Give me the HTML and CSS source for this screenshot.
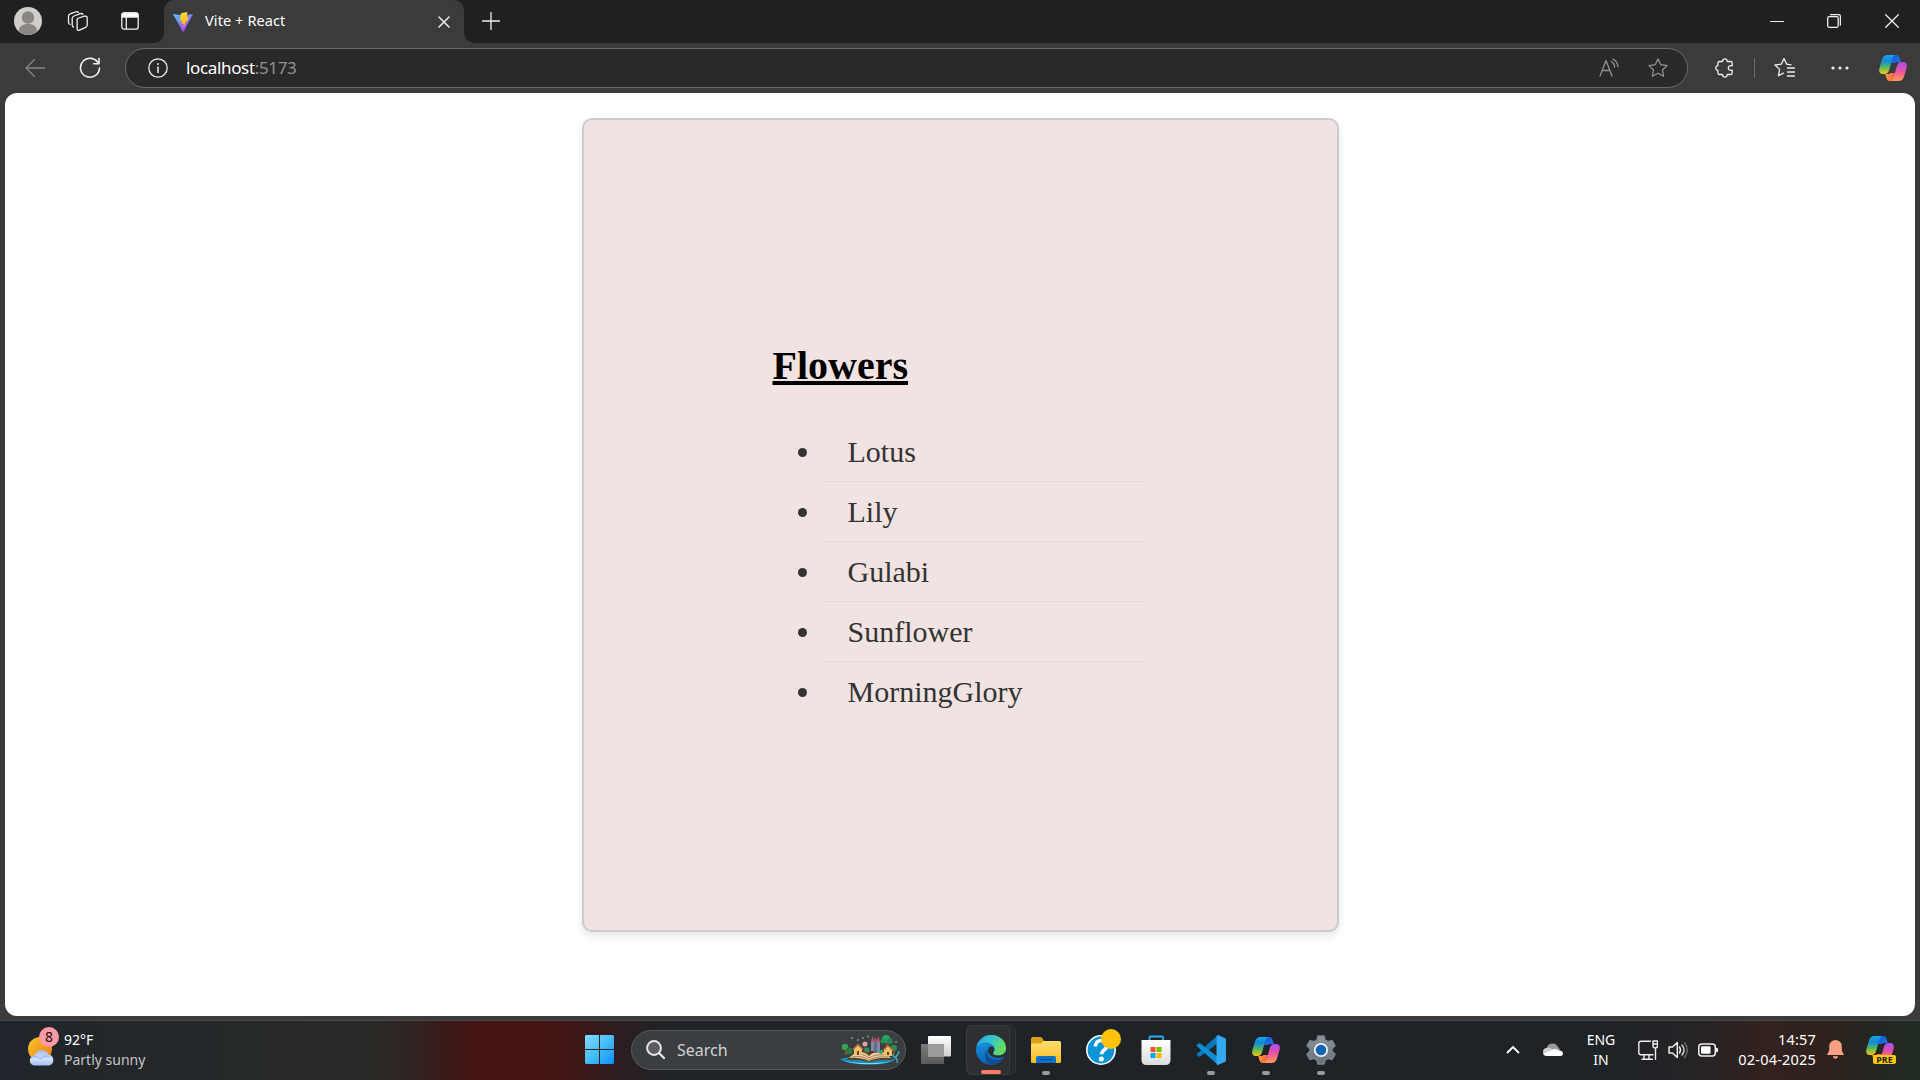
FILE: index.html
```html
<!DOCTYPE html>
<html lang="en">
<head>
<meta charset="utf-8">
<title>Vite + React</title>
<link rel="stylesheet" href="styles.css">
</head>
<body>
<svg class="defs" aria-hidden="true">
  <defs>
    <linearGradient id="cpBlue" x1="0" y1="0" x2="0" y2="1"><stop offset="0" stop-color="#18a5ee"/><stop offset=".3" stop-color="#1488dc"/><stop offset=".6" stop-color="#45b66c"/><stop offset="1" stop-color="#f5c90c"/></linearGradient>
    <linearGradient id="cpPink" x1="0" y1="0" x2="0" y2="1"><stop offset="0" stop-color="#a34ff0"/><stop offset=".45" stop-color="#e950a4"/><stop offset="1" stop-color="#ff9a55"/></linearGradient>
    <linearGradient id="cpNavy" x1="0" y1="0" x2="1" y2="1"><stop offset="0" stop-color="#1458d8"/><stop offset="1" stop-color="#2472e8"/></linearGradient>
    <linearGradient id="cpOrange" x1="0" y1="0" x2="1" y2="0"><stop offset="0" stop-color="#ff9b35"/><stop offset="1" stop-color="#f05b50"/></linearGradient>
    <linearGradient id="viteA" x1="0" y1="0" x2=".7" y2="1"><stop offset="0" stop-color="#41d1ff"/><stop offset="1" stop-color="#bd34fe"/></linearGradient>
    <linearGradient id="viteB" x1="0" y1="0" x2="0" y2="1"><stop offset="0" stop-color="#ffdd35"/><stop offset="1" stop-color="#ffa800"/></linearGradient>
    <linearGradient id="win" gradientUnits="userSpaceOnUse" x1="0" y1="0" x2="29" y2="29"><stop offset="0" stop-color="#84dcff"/><stop offset=".5" stop-color="#45bdf8"/><stop offset="1" stop-color="#0a92fa"/></linearGradient>
    <linearGradient id="sun" x1="0" y1="0" x2="1" y2="1"><stop offset="0" stop-color="#f8c62b"/><stop offset="1" stop-color="#f07a16"/></linearGradient>
    <linearGradient id="cloud" x1="0" y1="0" x2="0" y2="1"><stop offset="0" stop-color="#9dbdf3"/><stop offset=".6" stop-color="#d0e0fb"/><stop offset="1" stop-color="#9fbcf3"/></linearGradient>
    <linearGradient id="edgeTop" x1="0" y1="0" x2="1" y2=".4"><stop offset="0" stop-color="#2aa4dc"/><stop offset=".5" stop-color="#32c3d4"/><stop offset="1" stop-color="#68dc5a"/></linearGradient>
    <linearGradient id="edgeMid" x1="0" y1="0" x2="0" y2="1"><stop offset="0" stop-color="#1b9de2"/><stop offset="1" stop-color="#0c62b8"/></linearGradient>
    <linearGradient id="folder" x1="0" y1="0" x2="0" y2="1"><stop offset="0" stop-color="#ffdf70"/><stop offset="1" stop-color="#f8bd22"/></linearGradient>
    <linearGradient id="bag" x1="0" y1="0" x2="0" y2="1"><stop offset="0" stop-color="#fff"/><stop offset="1" stop-color="#dcdcdc"/></linearGradient>
    <linearGradient id="tvBack" x1="0" y1="0" x2="0" y2="1"><stop offset="0" stop-color="#7c7c7c"/><stop offset="1" stop-color="#5a5a5a"/></linearGradient>
    <linearGradient id="tvFront" x1="0" y1="0" x2="0" y2="1"><stop offset="0" stop-color="#fff"/><stop offset="1" stop-color="#cfcfcf"/></linearGradient>
    <linearGradient id="gear" x1="0" y1="0" x2="0" y2="1"><stop offset="0" stop-color="#8d959c"/><stop offset="1" stop-color="#68717a"/></linearGradient>
    <symbol id="copilot" viewBox="0 0 28 26">
      <path d="M13 0h4.500c1.800 0 2.600 1.200 3.100 2.900L21.800 7H19c-1.500 0-2.300.5-3 1H12z" fill="url(#cpNavy)"/>
      <path d="M15 26h-4.500c-1.800 0-2.600-1.200-3.100-2.900L6.200 19H9c1.200 0 2-.5 2.600-1H16z" fill="url(#cpOrange)"/>
      <path d="M8.500 0h8c-1.800.4-2.400 1.700-3 3.600L10 15.300C9.100 18 8.100 19 5.600 19H3.800C.6 19-.4 16.500.4 13.300L3 4.600C4 1.500 5.600 0 8.500 0z" fill="url(#cpBlue)"/>
      <path d="M19.500 26h-8c1.800-.4 2.400-1.700 3-3.600L18 10.700C18.900 8 19.900 7 22.400 7h1.800c3.200 0 4.200 2.500 3.400 5.700L25 21.400c-1 3.100-2.600 4.600-5.500 4.600z" fill="url(#cpPink)"/>
    </symbol>
  </defs>
</svg>

<header class="titlebar">
  <svg class="avatar" viewBox="0 0 28 28"><circle cx="14" cy="14" r="14" fill="#d0cecb"/><circle cx="14" cy="10.500" r="6.200" fill="#8b8784"/><path d="M4.800 24.500c0-5 3.500-7.500 9.200-7.500s9.200 2.500 9.200 7.500a14 14 0 0 1-18.400 0z" fill="#8b8784"/></svg>
  <svg class="ico workspaces" viewBox="0 0 22 22"><path d="M10.300 8.500l7.200-2.300c1.500-.4 2.700.3 2.700 1.700v7c0 1.200-.6 2-1.700 2.400l-5.900 2.900c-1.400.6-2.500 0-2.500-1.500v-8.200c0-1 .1-1.600.2-2zM6.500 17c-1-.2-1.300-.9-1.300-2V8.500c0-1.300.6-2 1.800-2.500l6.400-2.300c1.200-.4 2-.1 2.500.8M3 14.300c-1-.2-1.500-.9-1.500-2V6.300C1.500 5 2 4.300 3.200 3.800l5.600-2c1.300-.5 2.100-.2 2.700.7"/></svg>
  <svg class="ico tabactions" viewBox="0 0 18 18"><rect x=".8" y=".8" width="16.400" height="16.400" rx="2.500"/><path d="M1 3.500C1 1.800 2 1 3.500 1h11C16 1 17 1.800 17 3.500V5H1z" fill="#fff"/><path d="M5.300 5v12"/></svg>
  <div class="tab">
    <svg class="vite" viewBox="0 0 20 20"><path d="M0 2l10 1.500L20 2 10.800 19.300c-.3.600-1 .6-1.300 0z" fill="url(#viteA)"/><path d="M8 1.200L14.400 0l-.8 5 2-.3-1.200 4.500-1.600.4-2.400 7.200.4-5.300-2.500.6.600-3.600-2.200.4z" fill="url(#viteB)"/></svg>
    <span class="tab-title">Vite + React</span>
    <svg class="ico tab-close" viewBox="0 0 12 12"><path d="M1 1l10 10M11 1L1 11"/></svg>
  </div>
  <svg class="ico newtab" viewBox="0 0 18 18"><path d="M9 .5v17M.5 9h17"/></svg>
  <div class="window-buttons">
    <svg class="ico" viewBox="0 0 14 14"><path d="M.5 7.500h13" stroke-width="1"/></svg>
    <svg class="ico" viewBox="0 0 14 14"><rect x=".7" y="2.700" width="10.500" height="10.600" rx="1.500"/><path d="M3.500.6h8c1.200 0 1.900.8 1.900 2V11"/></svg>
    <svg class="ico" viewBox="0 0 14 14"><path d="M.7.700l12.600 12.600M13.300.7L.7 13.300"/></svg>
  </div>
</header>

<nav class="toolbar">
  <svg class="ico back" viewBox="0 0 20 18"><path d="M19.800 9H1M9.500.5L1 9l8.500 8.500"/></svg>
  <svg class="ico reload" viewBox="0 0 22 22"><path d="M19.500 6.500A9.500 9.500 0 1 0 20.500 11M20 1.500V6.800h-5.300"/></svg>
  <div class="address">
    <svg class="ico" viewBox="0 0 20 20"><circle cx="10" cy="10" r="9.200"/><path d="M10 9v5.500" stroke-width="1.500"/><circle cx="10" cy="6" r="1" fill="#ddd" stroke="none"/></svg>
    <span class="url">localhost<span class="port">:5173</span></span>
    <svg class="ico dim read" viewBox="0 0 20 20"><path d="M1 18L7 2.500 13 18M3.200 12.500h7.700M12.500 3.500c2 1.300 3 3.300 3.200 5.500M14 1c2.900 1.700 4.700 4.200 5 7.500"/></svg>
    <svg class="ico dim" viewBox="0 0 20 20"><path d="M10 1l2.800 5.700 6.300.9-4.600 4.400 1.100 6.300L10 15.300l-5.600 3 1.100-6.300L.9 7.600l6.300-.9z"/></svg>
  </div>
  <svg class="ico puzzle" viewBox="0 0 20 20"><path d="M4.500 3.500h3c.2-1.800 1-2.700 2.400-2.700s2.200.9 2.400 2.700h3.200c1 0 1.700.6 1.700 1.600v2.700c-2.600-.4-3.900.4-3.900 2.200s1.300 2.600 3.900 2.200v2.700c0 1-.7 1.600-1.700 1.600h-3.200c-.2 1.800-1 2.700-2.400 2.700s-2.200-.9-2.400-2.700h-3c-1 0-1.600-.6-1.600-1.600v-2.500C1.600 12.200.8 11.300.8 10s.8-2.200 2.100-2.400V5.100c0-1 .6-1.600 1.600-1.600z"/></svg>
  <i class="divider"></i>
  <svg class="ico favorites" viewBox="0 0 21 20"><path d="M17 7.300l-4.300-.7L10 1 7.400 6.600 1 7.500l4.600 4.400-1.200 6.400 5-2.700M13.500 10.500h7M13.500 14.500h7M13.500 18.500h7" transform="translate(0 -.5)"/></svg>
  <svg class="more" viewBox="0 0 18 4"><circle cx="2" cy="2" r="1.600"/><circle cx="9" cy="2" r="1.600"/><circle cx="16" cy="2" r="1.600"/></svg>
  <svg class="copilot"><use href="#copilot"/></svg>
</nav>

<main class="page">
  <section class="card">
    <h1>Flowers</h1>
    <ul>
      <li>Lotus</li>
      <li>Lily</li>
      <li>Gulabi</li>
      <li>Sunflower</li>
      <li>MorningGlory</li>
    </ul>
  </section>
</main>

<footer class="taskbar">
  <div class="weather">
    <div class="weather-icon">
      <svg viewBox="0 0 27 29"><circle cx="12" cy="12" r="12" fill="url(#sun)"/><path d="M7 28.500a5 5 0 0 1-.5-10 7.500 7.500 0 0 1 14-1A5.600 5.600 0 0 1 21 28.500z" fill="url(#cloud)"/><path d="M3 20.500q6-3 9 1.500 4-4 10-3" fill="none" stroke="#86a7e8" stroke-width=".8"/></svg>
      <span class="count">8</span>
    </div>
    <div class="weather-text"><span>92°F</span><span class="muted">Partly sunny</span></div>
  </div>

  <div class="apps">
    <svg class="start" viewBox="0 0 29 29"><path d="M1 0h13v14H0V1zM15 0h13l1 1v13H15zM0 15h14v14H1l-1-1zM15 15h14v13l-1 1H15z" fill="url(#win)"/></svg>
    <div class="search">
      <svg viewBox="0 0 19 19"><circle cx="8" cy="8" r="6.900" fill="#5b5d60" stroke="#e6e6e6" stroke-width="2"/><path d="M13 13l5 5" stroke="#e6e6e6" stroke-width="2.300" stroke-linecap="round"/></svg>
      <span>Search</span>
      <svg class="book" viewBox="0 0 60 30">
        <path d="M0 24q10-3 29-2t27 2q-6 5.500-27 5.500T0 24z" fill="#1588b4"/><path d="M1 24.500q8 3.500 28 3.500t25-3.500q-7 4.800-25 4.800T1 24.500z" fill="#7ddcf0"/>
        <path d="M7 25l7-8h30l9 8q-14-1-24 2-10-3-22-2z" fill="#5f3d25"/><path d="M9 23l7-6q8-1 13 4 5-5 14-4l8 6q-13-1-22 3-9-4-20-3z" fill="#ecd0a0"/><path d="M12 22q10-2 17 3 7-4 19-3M16 19.500q8-1 13 3.500 6-4 15-3" fill="none" stroke="#997047" stroke-width=".8"/>
        <path d="M31 8l1.500-7L34 8v8h-3zM37 8l1.500-7L40 8v10h-3z" fill="#8289a5"/><path d="M34 6h3v12h-3z" fill="#646a8a"/><path d="M31 7l1.500-6L34 7zM37 7l1.500-6L40 7zM34 6l1.500-4L37 6z" fill="#c45367"/>
        <circle cx="5" cy="12" r="3.200" fill="#35a45b"/><circle cx="9" cy="16" r="3.500" fill="#277a42"/><circle cx="46" cy="4" r="4" fill="#2aa35f"/><circle cx="50" cy="6" r="3" fill="#1c8850"/><circle cx="43" cy="6" r="2.500" fill="#229553"/><circle cx="54" cy="13" r="3" fill="#2c8f50"/><path d="M46 7h1.500v11H46zM5 14h1.500v6H5zM53 15h1.500v5H53z" fill="#8b5b35"/>
        <path d="M14 14l4-4 4 4v6h-8zM44 15l4-4 4 4v6h-8z" fill="#efc06b"/><path d="M13 14.500l5-5 5 5M43 15.500l5-5 5 5" fill="none" stroke="#ba7135" stroke-width="1.500"/><path d="M17 16h2v4h-2zM47 17h2v3h-2z" fill="#694023"/><circle cx="25" cy="9" r="2.500" fill="#dba5aa"/><path d="M25 11v7" stroke="#9b553c"/><circle cx="27" cy="15" r="2.500" fill="#28935e"/><circle cx="41" cy="17" r="2" fill="#39a75c"/>
        <path d="M59 16q-1 5-4 6 3 2 2 6M53 19q0 3 3 4" fill="none" stroke="#37b4c2" stroke-width="1.300"/><g fill="#7893a2"><circle cx="12" cy="3" r="1"/><circle cx="18" cy="5" r="1"/><circle cx="23" cy="3" r="1"/><circle cx="28" cy="1.500" r="1"/><circle cx="56" cy="7" r="1"/></g>
      </svg>
    </div>
    <svg class="taskview" viewBox="0 0 30 28"><rect y="8" width="23" height="20" rx="1" fill="url(#tvBack)"/><rect x="7" width="23" height="20.500" rx="1" fill="url(#tvFront)"/><path d="M7 8h16v12.500H7z" fill="#9b9b9b"/></svg>
    <div class="app active">
      <svg viewBox="0 0 30 30"><circle cx="15" cy="15" r="15" fill="url(#edgeMid)"/><path d="M.5 12C2.500 4.500 8.500 0 15 0c9 0 15 6 15 13 0 5-4 7.500-8 7.500-3 0-5-1.300-5-2.500 0-.8 1.500-1.500 1.500-4C18.500 10 14 7.500 9.500 7.500 5.500 7.500 2 9.500.5 12z" fill="url(#edgeTop)"/><path d="M11.500 13.500c-2 5 1 10.500 7 11.300 4 .5 6.800-1.300 9.600-2.600C25.500 27 20.500 30 15.500 30 9.500 29 7 20 11.500 13.500z" fill="#0d4d92"/><path d="M15 11.500c2 0 3.500 1.200 3.500 2.700 0 2-1.500 2.800-1.500 4 0 1.600 2.500 2.300 5 2.300 3.500 0 6-1.200 7.300-3.500L31 20l-2.700 2.300c-1-.8-2.300.7-5.300.7-6 0-11-3-11-7.200 0-2.500 1.200-4.300 3-4.300z" fill="#2b3037"/></svg>
    </div>
    <div class="app running"><svg viewBox="0 0 30 30"><path d="M0 4q0-2 2-2h7q1.500 0 2.300 1.200L13 6h16v10H0z" fill="#dba016"/><path d="M0 10q0-1.500 1.500-1.500H10L12.500 6H28.500Q30 6 30 7.500V26.500q0 1.500-1.500 1.500h-27Q0 28 0 26.500z" fill="url(#folder)"/><path d="M5 28v-5q0-2 2-2h16q2 0 2 2v5z" fill="#0f72c9"/><path d="M8.500 24.500h13" stroke="#0b4f94" stroke-width="1.300"/></svg></div>
    <div class="app"><svg viewBox="0 0 30 30"><circle cx="15" cy="15" r="14.200" fill="#0c94d6" stroke="#f4fbff" stroke-width="1.600"/><path d="M9.500 11.500c0-4 2.500-6 5.800-6 3.200 0 5.700 1.900 5.700 5 0 4.500-5.500 4.300-5.500 8.700" fill="none" stroke="#fff" stroke-width="3.700"/><circle cx="15.300" cy="24" r="2.500" fill="#fff"/></svg><i class="alert"></i></div>
    <div class="app"><svg viewBox="0 0 30 30"><path d="M8.500 6V2.200Q8.500 1.500 9.200 1.500h12Q22 1.500 22 2.200V6" fill="none" stroke="#26aef0" stroke-width="1.800"/><path d="M.5 5h29v20q0 5-5 5h-19q-5 0-5-5z" fill="url(#bag)"/><path d="M9.500 12h5v5h-5z" fill="#f25022"/><path d="M15.500 12h5v5h-5z" fill="#7fba00"/><path d="M9.500 18h5v5h-5z" fill="#00a4ef"/><path d="M15.500 18h5v5h-5z" fill="#ffb900"/></svg></div>
    <div class="app running"><svg viewBox="0 0 30 30"><path d="M1 18.700L22 0v8L4.300 21.500q-.8.600-1.600 0L.7 20q-.8-.7.300-1.300z" fill="#0877bd"/><path d="M1 11.300L22 30v-8L4.300 8.500q-.8-.6-1.600 0L.7 10q-.8.700.3 1.300z" fill="#0f8ed3"/><path d="M22 0l6.800 3q1.200.6 1.200 2v20q0 1.400-1.200 2L22 30q-1.300 0-1.500-2V2q.2-2 1.500-2z" fill="#32a8f0"/></svg></div>
    <div class="app running"><svg class="copilot"><use href="#copilot"/></svg></div>
    <div class="app running"><svg viewBox="0 0 30 30"><path d="M12 1h6l1 4 3 1.700 4-1.200 3 5.200-3 2.900v2.800l3 2.900-3 5.200-4-1.200L19 25l-1 4h-6l-1-4-3-1.700-4 1.200-3-5.200 3-2.900v-2.800l-3-2.900 3-5.200 4 1.200L11 5z" fill="url(#gear)" stroke="#7b848c" stroke-width="1.500" stroke-linejoin="round"/><circle cx="15" cy="15" r="6.200" fill="#1265b5" stroke="#f2f2f2" stroke-width="1.800"/></svg></div>
  </div>

  <div class="tray">
    <svg class="chevron" viewBox="0 0 14 8"><path d="M1 7l6-6 6 6" fill="none" stroke="#fff" stroke-width="1.800"/></svg>
    <svg class="onedrive" viewBox="0 0 20 14"><path d="M4 9a6 6 0 0 1 11-5l3 4z" fill="#9b9b9b"/><path d="M4 13a4 4 0 0 1 0-8c3-.8 5 .5 6 2l8 6z" fill="#cfcfcf"/><path d="M4 13q-3-.3-4-2l8-3.500Q11 5 14 6.500l2 1.200q4-.2 4 2.800 0 2.500-3 2.500z" fill="#fff"/></svg>
    <div class="lang"><span>ENG</span><span>IN</span></div>
    <div class="status">
      <svg class="ico" viewBox="0 0 20 20"><path d="M12.500 1.200H3Q.8 1.200.8 3.500v9q0 2.300 2.200 2.300h12M6 15v4M11 15v4M4 19.200h10.500M17.500 9v10.200M15 1h4.500v5q0 2-2.200 2T15 6zM15 4h4" stroke-width="1.400"/></svg>
      <svg class="ico" viewBox="0 0 20 20"><path d="M1 7h3.500L9.300 2.500v15L4.500 13H1zM11.500 7q2 3 0 6"/><path d="M14 5q4 5 0 10" stroke="#ccc"/><path d="M16.500 2.500q5.500 7.500 0 15" stroke="#676767"/></svg>
      <svg class="ico" viewBox="0 0 20 20"><rect x=".8" y="4" width="16.500" height="12" rx="3" stroke-width="1.500"/><rect x="3" y="6.200" width="9.500" height="7.600" rx="1" fill="#fff" stroke="none"/><path d="M18.300 8.500q1.300 0 1.300 1.500t-1.300 1.500z" fill="#fff"/></svg>
    </div>
    <div class="clock"><span>14:57</span><span>02-04-2025</span></div>
    <svg class="bell" viewBox="0 0 17 19"><path d="M8.500 0a6.300 6.300 0 0 1 6.300 6.300v4.300L17 15H0l2.200-4.400V6.300A6.300 6.300 0 0 1 8.500 0zM5.800 16.200h5.400q-.8 2.500-2.700 2.500t-2.700-2.500z" fill="#fd9f82"/></svg>
    <div class="preview"><svg class="copilot"><use href="#copilot"/></svg><span class="pre">PRE</span></div>
  </div>
</footer>
</body>
</html>
```
FILE: styles.css
```css
* { box-sizing: border-box; }
body {
  margin: 0;
  width: 1920px;
  height: 1080px;
  overflow: hidden;
  display: grid;
  grid-template-rows: 43px 50px 922.500px 4.500px 60px;
  background: #3b3b3b;
  color: #fff;
  font-family: "Noto Sans", "Open Sans", sans-serif;
}
svg { display: block; flex: none; }
.defs { position: absolute; width: 0; height: 0; }
.ico { fill: none; stroke: #eee; stroke-width: 1.3; stroke-linecap: round; stroke-linejoin: round; }
.dim { stroke: #929292; }
.copilot { width: 28px; height: 26px; }

.titlebar { display: flex; align-items: center; background: #202020; padding-left: 14px; grid-row: 1; }
.titlebar > svg { margin-bottom: 1px; }
.avatar { width: 28px; height: 28px; }
.workspaces { width: 22px; height: 22px; margin-left: 24.500px; }
.tabactions { width: 18px; height: 18px; margin-left: 32.500px; }
.tab {
  position: relative;
  display: flex;
  align-items: center;
  width: 300px;
  height: 43px;
  margin-left: 25px;
  padding: 0 14px 0 9px;
  background: #3b3b3b;
  border-radius: 10px 10px 0 0;
}
.tab::before, .tab::after { content: ""; position: absolute; bottom: 0; width: 10px; height: 10px; }
.tab::before { left: -10px; background: radial-gradient(circle at 0 0, transparent 9.5px, #3b3b3b 10px); }
.tab::after { right: -10px; background: radial-gradient(circle at 100% 0, transparent 9.5px, #3b3b3b 10px); }
.vite { width: 20px; height: 20px; }
.tab-title { margin: 0 0 3px 12px; font-size: 14.500px; line-height: 20px; letter-spacing: .1px; }
.tab-close { width: 12px; height: 12px; margin-left: auto; stroke-width: 1.5; }
.newtab { width: 18px; height: 18px; margin-left: 17.500px; }
.window-buttons { display: flex; gap: 43px; margin: 0 21.500px 1px auto; }
.window-buttons svg { width: 14px; height: 14px; }
.window-buttons svg:last-child { margin-left: 1px; }

.toolbar { display: flex; align-items: center; padding-left: 25px; grid-row: 2; }
.back { width: 20px; height: 18px; stroke: #858585; }
.reload { width: 22px; height: 22px; margin-left: 34px; stroke-width: 1.6; }
.address {
  display: flex;
  align-items: center;
  width: 1563px;
  height: 40px;
  margin-left: 24px;
  padding: 0 19px 0 22px;
  background: #292929;
  border: 1px solid #6a6a6a;
  border-radius: 20px;
}
.address svg { width: 20px; height: 20px; }
.url { margin-left: 18px; font-size: 17px; line-height: 24px; letter-spacing: -.35px; }
.port { color: #929292; }
.address .read { margin: 0 29px 0 auto; }
.puzzle { width: 20px; height: 20px; margin-left: 27px; }
.divider { width: 1px; height: 20px; margin-left: 19px; background: #696969; }
.favorites { width: 21px; height: 20px; margin-left: 19px; }
.more { width: 18px; height: 4px; margin-left: 36px; fill: #eee; }
.toolbar .copilot { margin-left: 30px; }

.page {
  grid-row: 3;
  margin: 0 5px;
  padding-top: 25px;
  background: #fff;
  border-radius: 12px;
  font-family: "Liberation Serif", "Times New Roman", serif;
}
.card {
  width: 757px;
  height: 814px;
  margin: 0 auto 0 577px;
  padding: 223px 189px 0 188.500px;
  background: #f0e3e2;
  border: 2px solid #ccc;
  border-radius: 10px;
  box-shadow: 0 4px 8px rgba(0, 0, 0, .1);
}
.card h1 {
  margin: 0;
  color: #000;
  font-size: 40px;
  line-height: 46px;
  text-decoration: underline;
}
.card ul { margin: 33px 0 0; padding: 0 0 0 50px; color: #333; font-size: 30px; }
.card li { height: 60px; padding: 12px 25px; line-height: 35px; border-bottom: 1px solid #ddd; }
.card li:last-child { border-bottom: 0; }

.taskbar {
  grid-row: 5;
  display: flex;
  align-items: center;
  padding-bottom: 2px;
  border-top: 1px solid #484848;
  background: linear-gradient(90deg, #1f252a 0, #25282a 190px, #292a27 370px, #2e2523 405px, #381b1a 440px, #461513 480px, #461413 520px, #421514 560px, #2b1d20 620px, #1f2327 670px, #1e2327 1600px, #252326 1690px, #33211e 1770px, #2c221e 1835px, #202a23 1910px);
  font-size: 14px;
  line-height: 20px;
}
.weather { display: flex; width: 585px; padding-left: 28px; }
.weather-icon { position: relative; width: 27px; margin-right: 9px; padding-top: 7px; }
.weather-icon svg { width: 27px; height: 29px; }
.count {
  position: absolute;
  left: 11px;
  top: -3px;
  width: 20px;
  height: 20px;
  border-radius: 50%;
  background: #ff99a4;
  color: #111;
  text-align: center;
}
.weather-text { display: flex; flex-direction: column; }
.muted { color: #c6c6c6; }

.apps { display: flex; align-items: center; height: 57px; }
.start { width: 29px; height: 29px; margin-right: 17px; }
.search {
  display: flex;
  align-items: center;
  width: 275px;
  height: 40px;
  padding: 0 5px 0 14px;
  border: 1px solid #58595b;
  border-radius: 20px;
  background: #3b3e41;
  color: #d2d2d2;
  font-size: 16px;
}
.search svg { width: 19px; height: 19px; }
.search span { margin-left: 12px; padding-top: 1px; }
.search .book { width: 60px; height: 30px; margin-left: auto; }
.taskview { width: 30px; height: 28px; margin: 0 12px 0 15px; }
.app { position: relative; display: flex; align-items: center; justify-content: center; width: 55px; height: 50px; }
.app > svg:not(.copilot) { width: 30px; height: 30px; }
.app.running::after, .app.active::after {
  content: "";
  position: absolute;
  bottom: 0;
  width: 8px;
  height: 4px;
  border-radius: 2px;
  background: #9a9a9c;
}
.app.active { width: 50px; margin: 0 2px 0 3px; justify-content: flex-start; padding-left: 9px; background: #26292d; border: 1px solid #34363a; border-radius: 6px; }
.app.active::before { content: ""; position: absolute; inset: -1px 5px -1px -1px; border: 1px solid #3a3c3f; border-radius: 6px; background: #2d2f33; }
.app.active svg { position: relative; }
.app.active::after { left: 14px; width: 20px; background: #fa7e67; }
.alert { position: absolute; left: 28px; top: 4px; width: 20px; height: 20px; border-radius: 50%; background: #ffc20e; }

.tray { display: flex; align-items: center; height: 57px; margin-left: auto; padding-right: 24px; }
.chevron { width: 14px; height: 8px; }
.onedrive { width: 20px; height: 14px; margin-left: 23px; }
.lang, .clock { display: flex; flex-direction: column; }
.lang { width: 76px; align-items: center; }
.status { display: flex; gap: 10px; margin-left: -1px; }
.status svg { width: 20px; height: 20px; stroke-width: 1.5; }
.clock { width: 98px; align-items: flex-end; padding-bottom: 2px; font-size: 14.500px; letter-spacing: .2px; }
.bell { width: 17px; height: 19px; margin: 0 22px 0 11px; }
.preview { position: relative; width: 30px; height: 28px; }
.pre {
  position: absolute;
  left: 7px;
  bottom: 0;
  width: 23px;
  height: 9px;
  border-radius: 2px;
  background: #ffc90e;
  color: #222;
  font-size: 9px;
  font-weight: 700;
  line-height: 9px;
  text-align: center;
}
```
